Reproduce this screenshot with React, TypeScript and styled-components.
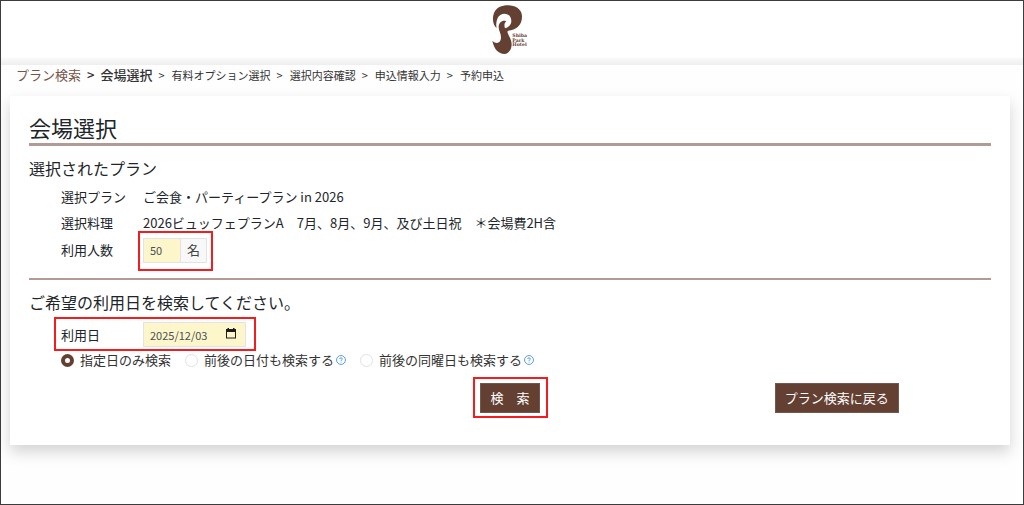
import React, { useState } from "react";
import styled, { createGlobalStyle } from "styled-components";

const brown = "#644033";
const rule = "#b09c95";
const ink = "#212529";
const jp = `"Noto Sans CJK JP", "Noto Sans", sans-serif`;

const GlobalStyle = createGlobalStyle`
  *, *::before, *::after { box-sizing: border-box; }
  body { margin: 0; background: #fff; color: ${ink}; font-family: ${jp}; font-size: 13px; line-height: 20px; }
  input, button { font-family: inherit; }
`;

const Page = styled.div`
  min-height: 100vh;
  border: 1px solid #3c3c3c;
  background: #fefefe;
`;

const Header = styled.header`
  display: flex;
  justify-content: center;
  height: 64px;
  padding: 3px 4px 0 0;
  background: linear-gradient(#fff 56px, #f8f8f8 58px, #eeeeee 64px);
`;

const Logo = styled.svg`
  display: block;
  width: 40px;
  height: 52px;
`;

const Crumbs = styled.ol`
  display: flex;
  align-items: center;
  gap: 6px;
  list-style: none;
  margin: 0;
  padding: 0 15px;
  height: 20px;
  color: #333;
`;

const Crumb = styled.li<{ $big?: boolean; $current?: boolean }>`
  display: flex;
  align-items: center;
  gap: ${(p) => (p.$big ? 6 : 7)}px;
  white-space: nowrap;
  font-size: ${(p) => (p.$big ? 13 : 11)}px;
  font-weight: ${(p) => (p.$current ? 500 : 400)};
`;

const CrumbLink = styled.a`
  color: #75564a;
  text-decoration: none;
`;

const Card = styled.main`
  margin: 11px 13px 0 9px;
  padding: 17px 19px 32px;
  background: #fff;
  box-shadow: 0 7px 14px rgba(0, 0, 0, 0.17);
`;

const Title = styled.h1`
  margin: 0;
  padding-bottom: 2px;
  border-bottom: 3px solid ${rule};
  font-size: 22px;
  line-height: 28px;
  font-weight: 400;
`;

const SectionTitle = styled.h2`
  margin: 0;
  font-size: 16px;
  line-height: 24px;
  font-weight: 400;
`;

const Section = styled.section`
  padding-top: 10px;
`;

const Divider = styled.hr`
  margin: 15px 0 0;
  border: 0;
  height: 2px;
  background: ${rule};
`;

const Fields = styled.dl`
  margin: 4px 0 0;
  padding-left: 32px;
`;

const Field = styled.div`
  display: grid;
  grid-template-columns: 82px 1fr;
  align-items: center;
  min-height: 26px;
  dt, dd { margin: 0; }
  &:last-child { margin-top: 1px; }
`;

const DateRow = styled.div`
  padding-left: 32px;
  margin-top: 8px;
`;

const DateField = styled.div`
  display: grid;
  grid-template-columns: 82px 103px;
  align-items: center;
`;

const Marked = styled.div<{ $inset: string }>`
  position: relative;
  width: fit-content;
  &::after {
    content: "";
    position: absolute;
    inset: ${(p) => p.$inset};
    border: 2px solid #f41c1c;
    pointer-events: none;
  }
`;

const InputGroup = styled.div`
  display: flex;
  height: 25px;
  border: 1px solid #e3e3e6;
  color: #444;
`;

const TextInput = styled.input<{ $width: number }>`
  width: ${(p) => p.$width}px;
  min-width: 0;
  padding: 0 6px;
  border: 0;
  border-radius: 0;
  background: #fdf6cb;
  color: #495057;
  font-size: 11px;
  outline: none;
`;

const Suffix = styled.span`
  display: flex;
  align-items: center;
  padding: 0 6px;
  border-left: 1px solid #e3e3e6;
  background: #f8f8f9;
`;

const PickerButton = styled.button`
  display: flex;
  align-items: center;
  flex: 1;
  padding: 0 0 2px 2px;
  border: 0;
  background: #fdf6cb;
`;

const Options = styled.div`
  display: flex;
  align-items: center;
  gap: 14px;
  margin-top: 3px;
  padding-left: 32px;
  color: #333;
`;

const Option = styled.label`
  display: flex;
  align-items: center;
  gap: 6px;
`;

const Radio = styled.input`
  appearance: none;
  width: 13px;
  height: 13px;
  margin: 0;
  border: 1px solid #dee2e6;
  border-radius: 50%;
  background: #fff;
  &:checked { border: 4px solid ${brown}; }
`;

const OptionText = styled.span`
  display: flex;
  align-items: center;
  gap: 2px;
`;

const Actions = styled.div`
  display: grid;
  grid-template-columns: repeat(3, 1fr);
  justify-items: center;
  margin: 13px -9px 0;
`;

const Button = styled.button`
  height: 30px;
  padding: 0 9px;
  border: 1px solid #75564a;
  background: ${brown};
  color: #fff;
  font-size: 13px;
  line-height: 20px;
  white-space: nowrap;
`;

const SearchSlot = styled(Marked)`
  grid-column: 2;
`;

const HotelLogo = () => (
  <Logo viewBox="30 12 120 156" role="img" aria-label="Shiba Park Hotel">
    <path
      fill={brown}
      d="M50 84C34 72 34 34 58 21C86 8 127 18 126 50C126 76 108 90 84 92C82 93 82 97 84 101C87 109 95 119 95 133C95 149 86 161 73 162C56 160 43 150 37 122C47 132 61 132 63 115C64 101 56 93 56 82C56 67 68 59 79 64C73 68 72 76 75 85C93 80 98 64 91 51C83 36 59 38 52 56C48 66 48 76 50 84Z"
    />
    <g fill={brown} fontFamily="DejaVu Serif, serif" fontWeight="700" fontSize="14">
      <text x="97" y="112">Shiba</text>
      <text x="97" y="125">Park</text>
      <text x="97" y="138">Hotel</text>
    </g>
  </Logo>
);

const Help = () => (
  <svg width="10" height="10" viewBox="0 0 11 11" fill="none" stroke="#4a94dc" aria-hidden="true">
    <circle cx="5.5" cy="5.5" r="4.9" strokeWidth="1" />
    <path d="M4 4.4C4 2.7 7 2.7 7 4.4C7 5.4 5.5 5.3 5.5 6.6M5.5 7.4V8.3" strokeWidth="1" />
  </svg>
);

const Calendar = () => (
  <svg width="10" height="11" viewBox="0 0 10 11" aria-hidden="true">
    <path fill="#1c1c1c" fillRule="evenodd" d="M0 1H1.5V0H3V1H7V0H8.5V1H10V10.5H0ZM1 4V9.5H9V4Z" />
  </svg>
);

const steps = ["有料オプション選択", "選択内容確認", "申込情報入力", "予約申込"];
const modes = [
  { id: "exact", label: "指定日のみ検索", help: false },
  { id: "near", label: "前後の日付も検索する", help: true },
  { id: "weekday", label: "前後の同曜日も検索する", help: true },
];

export default function App() {
  const [people, setPeople] = useState("50");
  const [date, setDate] = useState("2025/12/03");
  const [mode, setMode] = useState("exact");

  return (
    <Page>
      <GlobalStyle />
      <Header>
        <HotelLogo />
      </Header>
      <nav>
        <Crumbs>
          <Crumb $big><CrumbLink href="#plans">プラン検索</CrumbLink></Crumb>
          <Crumb $big $current><span>&gt;</span><span>会場選択</span></Crumb>
          {steps.map((s) => (
            <Crumb key={s}><span>&gt;</span><span>{s}</span></Crumb>
          ))}
        </Crumbs>
      </nav>
      <Card>
        <Title>会場選択</Title>
        <Section>
          <SectionTitle>選択されたプラン</SectionTitle>
          <Fields>
            <Field><dt>選択プラン</dt><dd>ご会食・パーティープラン in 2026</dd></Field>
            <Field><dt>選択料理</dt><dd>2026ビュッフェプランA　7月、8月、9月、及び土日祝　＊会場費2H含</dd></Field>
            <Field>
              <dt><label htmlFor="people">利用人数</label></dt>
              <dd>
                <Marked $inset="-7px -6px -8px -5px">
                  <InputGroup>
                    <TextInput id="people" $width={36} value={people} onChange={(e) => setPeople(e.target.value)} />
                    <Suffix>名</Suffix>
                  </InputGroup>
                </Marked>
              </dd>
            </Field>
          </Fields>
        </Section>
        <Divider />
        <Section>
          <SectionTitle>ご希望の利用日を検索してください。</SectionTitle>
          <DateRow>
            <Marked $inset="-5px -10px -4px -7px">
              <DateField>
                <label htmlFor="date">利用日</label>
                <InputGroup>
                  <TextInput id="date" $width={80} value={date} onChange={(e) => setDate(e.target.value)} />
                  <PickerButton type="button" aria-label="カレンダー"><Calendar /></PickerButton>
                </InputGroup>
              </DateField>
            </Marked>
          </DateRow>
          <Options>
            {modes.map((m) => (
              <Option key={m.id}>
                <Radio type="radio" name="mode" checked={mode === m.id} onChange={() => setMode(m.id)} />
                <OptionText>{m.label}{m.help && <Help />}</OptionText>
              </Option>
            ))}
          </Options>
        </Section>
        <Actions>
          <SearchSlot $inset="-6px -8px -5px -7px"><Button type="submit">検　索</Button></SearchSlot>
          <Button type="button">プラン検索に戻る</Button>
        </Actions>
      </Card>
    </Page>
  );
}
